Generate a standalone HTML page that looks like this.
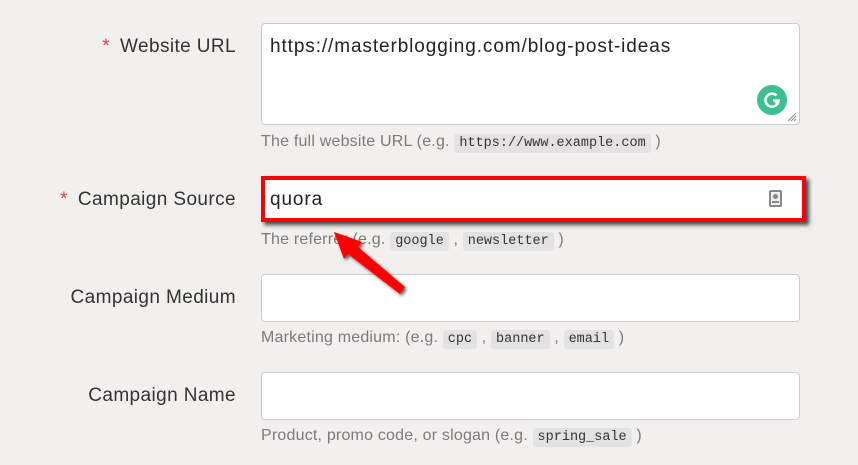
<!DOCTYPE html>
<html><head><style>
body{margin:0;width:858px;height:465px;background:#f1f0ef;font-family:"Liberation Sans",sans-serif;position:relative;overflow:hidden}
.l{position:absolute;right:622px;font-size:19px;color:#333;white-space:nowrap;letter-spacing:.4px}
.l b{color:#d9403f;font-weight:normal;margin-right:10px}
.in{position:absolute;left:261px;width:537px;background:#fff;border:1px solid #ccc;border-radius:4px}
.h{position:absolute;left:261px;font-size:16px;color:#7a7a7a;white-space:nowrap;letter-spacing:.2px}
code{font-family:"Liberation Mono",monospace;font-size:13.5px;color:#333;background:#e2e2e2;padding:2px 5px;border-radius:3px;letter-spacing:0}
.t{position:absolute;font-size:19px;color:#222;letter-spacing:.9px}
</style></head><body>
<div class="l" style="top:36px"><b>*</b>Website URL</div>
<div class="in" style="top:23px;height:100px"></div>
<div class="t" style="left:270px;top:36px">https://masterblogging.com/blog-post-ideas</div>
<div style="position:absolute;left:757px;top:85px;width:30px;height:30px;border-radius:50%;background:#3dbf8f"></div>
<svg style="position:absolute;left:757px;top:85px" width="30" height="30"><path d="M19.5 10.5A6.5 6.5 0 1 0 21.5 15.5H16" fill="none" stroke="#fff" stroke-width="2.5"/><path d="M18 18l3.5-3" stroke="#fff" stroke-width="2"/></svg>
<svg style="position:absolute;left:787px;top:112px" width="10" height="10"><path d="M1 9L9 1M4 9L9 4M7 9L9 7" stroke="#888"/></svg>
<div class="h" style="top:133px">The full website URL (e.g. <code>https://www.example.com</code> )</div>

<div class="l" style="top:189px"><b>*</b>Campaign Source</div>
<div style="position:absolute;left:261px;top:176px;width:537px;height:38px;background:#fff;border:4px solid #f00;box-shadow:3px 3px 4px #444"></div>
<div class="t" style="left:270px;top:189px">quora</div>
<div style="position:absolute;left:769px;top:190px;width:13px;height:17px;border:2px solid #888;border-radius:2px;box-sizing:border-box;background:#eee"><div style="width:5px;height:5px;background:#888;border-radius:50%;margin:2px auto 0"></div><div style="width:7px;height:2px;background:#888;margin:2px auto 0"></div></div>
<div class="h" style="top:231px">The referrer (e.g. <code>google</code> , <code>newsletter</code> )</div>

<div class="l" style="top:287px">Campaign Medium</div>
<div class="in" style="top:274px;height:46px"></div>
<div class="h" style="top:329px">Marketing medium: (e.g. <code>cpc</code> , <code>banner</code> , <code>email</code> )</div>

<div class="l" style="top:385px">Campaign Name</div>
<div class="in" style="top:372px;height:46px"></div>
<div class="h" style="top:427px">Product, promo code, or slogan (e.g. <code>spring_sale</code> )</div>
<svg style="position:absolute;left:0;top:0" width="858" height="465"><defs><filter id="s"><feDropShadow dx="2" dy="2" stdDeviation="1.5" flood-color="#000" flood-opacity=".6"/></filter></defs><g filter="url(#s)" fill="#f00"><path d="M400 294L405 287L358 247L362 242L334 232L344 259L348 254Z"/></g></svg>
</body></html>
